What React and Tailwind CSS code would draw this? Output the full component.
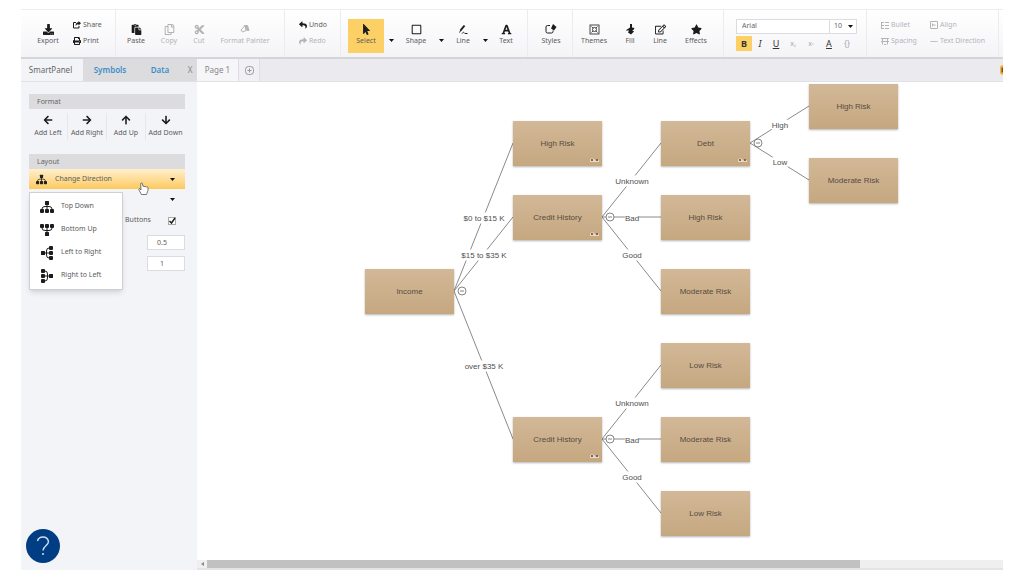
import { useState } from "react";
import {
  FaArrowDown,
  FaArrowLeft,
  FaArrowRight,
  FaArrowUp,
  FaCut,
  FaDownload,
  FaFont,
  FaMousePointer,
  FaPaste,
  FaPrint,
  FaRegCopy,
  FaRegEdit,
  FaRegSquare,
  FaReply,
  FaShare,
  FaStar,
} from "react-icons/fa";

const NODE_W = 89;
const NODE_H = 44;

// x is the left edge, y the vertical centre
const NODES = [
  { id: "income", label: "Income", x: 168, y: 209 },
  { id: "high", label: "High Risk", x: 316, y: 61, more: true },
  { id: "credit1", label: "Credit History", x: 316, y: 135, more: true },
  { id: "credit2", label: "Credit History", x: 316, y: 357, more: true },
  { id: "debt", label: "Debt", x: 464, y: 61, more: true },
  { id: "bad1", label: "High Risk", x: 464, y: 135 },
  { id: "good1", label: "Moderate Risk", x: 464, y: 209 },
  { id: "unknown2", label: "Low Risk", x: 464, y: 283 },
  { id: "bad2", label: "Moderate Risk", x: 464, y: 357 },
  { id: "good2", label: "Low Risk", x: 464, y: 431 },
  { id: "debtHigh", label: "High Risk", x: 612, y: 24 },
  { id: "debtLow", label: "Moderate Risk", x: 612, y: 98 },
];

const EDGES = [
  { from: "income", to: "high", label: "$0 to $15 K" },
  { from: "income", to: "credit1", label: "$15 to $35 K" },
  { from: "income", to: "credit2", label: "over $35 K" },
  { from: "credit1", to: "debt", label: "Unknown" },
  { from: "credit1", to: "bad1", label: "Bad" },
  { from: "credit1", to: "good1", label: "Good" },
  { from: "credit2", to: "unknown2", label: "Unknown" },
  { from: "credit2", to: "bad2", label: "Bad" },
  { from: "credit2", to: "good2", label: "Good" },
  { from: "debt", to: "debtHigh", label: "High" },
  { from: "debt", to: "debtLow", label: "Low" },
];

const DIRECTIONS = [
  { label: "Top Down", turn: "rotate-0" },
  { label: "Bottom Up", turn: "rotate-180" },
  { label: "Left to Right", turn: "-rotate-90" },
  { label: "Right to Left", turn: "rotate-90" },
];

const findNode = (id) => NODES.find((n) => n.id === id);

function Caret() {
  return (
    <svg width="5" height="3" viewBox="0 0 5 3" className="shrink-0">
      <path d="M0 0h5L2.5 3z" fill="#111" />
    </svg>
  );
}

function TreeIcon({ className }) {
  return (
    <svg viewBox="0 0 14 14" fill="currentColor" className={`shrink-0 ${className}`}>
      <rect x="5" y="1" width="4" height="4" rx=".5" />
      <rect x="0" y="9" width="4" height="4" rx="1" />
      <rect x="5" y="9" width="4" height="4" rx="1" />
      <rect x="10" y="9" width="4" height="4" rx="1" />
      <path d="M7 5v4M2 9Q2 6.500 5 6.500h4Q12 6.500 12 9" fill="none" stroke="currentColor" />
    </svg>
  );
}

function Group({ className, children }) {
  return (
    <div
      className={`flex shrink-0 items-start border-r border-[#ececf0] ${className}`}
    >
      {children}
    </div>
  );
}

function Tool({ icon, label, width, active, disabled }) {
  return (
    <button
      disabled={disabled}
      className={`mt-[9px] flex h-[34px] shrink-0 flex-col items-center pt-[4px] ${width} ${
        active ? "bg-[#fdd065]" : ""
      } ${disabled ? "text-[#b4b4b8]" : "text-[#1c1c1c]"}`}
    >
      <span className="flex h-[12px] items-center text-[11px]">{icon}</span>
      <span
        className={`text-[7px] leading-[12px] whitespace-nowrap ${
          disabled ? "" : "text-[#5c5c5c]"
        }`}
      >
        {label}
      </span>
    </button>
  );
}

function CaretButton({ name }) {
  return (
    <button
      aria-label={name}
      className="mt-[9px] flex h-[34px] w-[14px] shrink-0 items-center justify-center pt-[9px]"
    >
      <Caret />
    </button>
  );
}

function SmallTool({ icon, label, disabled }) {
  return (
    <button
      disabled={disabled}
      className={`flex h-[16px] items-center gap-[2px] text-[7px] leading-[10px] whitespace-nowrap ${
        disabled ? "text-[#b4b4b8]" : "text-[#1c1c1c]"
      }`}
    >
      <span className="text-[8px]">{icon}</span>
      <span className={disabled ? "" : "text-[#5c5c5c]"}>{label}</span>
    </button>
  );
}

function ShareIcon() {
  return (
    <svg width="8" height="8" viewBox="0 0 8 8">
      <path d="M3 1.500H.5v5.500h5.500V5" fill="none" stroke="currentColor" />
      <path d="M5.500 0 8 2.200 5.500 4.400V3.200Q3.500 3 2.500 5 2.500 1.500 5.500 1.300z" fill="currentColor" />
    </svg>
  );
}

function PainterIcon() {
  return (
    <svg width="10" height="10" viewBox="0 0 10 10" fill="none" stroke="currentColor">
      <path d="M5 1.500 1 6l1.500 2L6 6.500z" />
      <path d="M4.500 1.500h3L9 6.500H7z" fill="currentColor" />
    </svg>
  );
}

function PenIcon() {
  return (
    <svg width="11" height="11" viewBox="0 0 11 11" fill="none" stroke="currentColor">
      <path d="M2.500 6.500 6.500 1.500" strokeWidth="2" />
      <path d="M1.500 8.500 3 6M4 9.500c1.500-2 2-1 3 0h2.500" />
    </svg>
  );
}

function StylesIcon() {
  return (
    <svg width="12" height="10" viewBox="0 0 12 10" fill="none" stroke="currentColor">
      <path d="M5 1.500H2.500Q1 1.500 1 3v4.500Q1 9 2.500 9h4Q8 9 8 7.500V6.500" />
      <path d="M8 0 11.500 3 9 6.500 6 4.500z" fill="currentColor" stroke="none" />
    </svg>
  );
}

function ThemesIcon() {
  return (
    <svg width="11" height="11" viewBox="0 0 11 11" fill="none" stroke="currentColor" strokeWidth=".8">
      <rect x="1" y="1" width="9" height="9" />
      <circle cx="5.500" cy="5.500" r="2" />
      <path d="M2.500 2.500l1.500 1.500M8.500 2.500 7 4M2.500 8.500 4 7M8.500 8.500 7 7" />
    </svg>
  );
}

function FillIcon() {
  return (
    <svg width="10" height="11" viewBox="0 0 10 11" fill="currentColor">
      <path d="M5 0h2v3.500L9.500 4 8.500 6H7l2 1.500L6 10.500 3 8.500 4 6.500H.5L5 3.500z" />
    </svg>
  );
}

function BulletIcon() {
  return (
    <svg width="8" height="7" viewBox="0 0 8 7" fill="none" stroke="currentColor">
      <path d="M0 .5h3M4 .5h4M0 3.500h3M4 3.500h4M0 6.500h3M4 6.500h4M.5 0v7" />
    </svg>
  );
}

function SpacingIcon() {
  return (
    <svg width="8" height="7" viewBox="0 0 8 7" fill="none" stroke="currentColor">
      <path d="M0 .5h8M0 3.500h8M1.500 1v5.500M6.500 1v5.500M3 6.500h2" />
    </svg>
  );
}

function AlignIcon() {
  return (
    <svg width="8" height="8" viewBox="0 0 8 8" fill="none" stroke="currentColor">
      <path d="M.5.5h7v7h-7zM2.500 4h3M2.500 2.500v3" />
    </svg>
  );
}

function HandCursor() {
  return (
    <svg
      width="11"
      height="14"
      viewBox="0 0 11 14"
      className="pointer-events-none absolute top-[13px] left-[109px] z-20"
    >
      <path
        d="M3 8 1.500 6.500Q.5 7 1 8l2.500 4.500h5L10 8.500V5.500Q9.500 4.500 8.500 5.200 8 4 6.800 4.700 6 3.700 5 4.300L4.200 1.200Q3 .5 2.700 1.500z"
        fill="#fff"
        stroke="#444"
        strokeWidth=".7"
      />
    </svg>
  );
}

function Toolbar() {
  const [bold, setBold] = useState(true);

  return (
    <header className="flex h-[50px] shrink-0 overflow-hidden border-t border-b-2 border-t-[#ececee] border-b-[#d3d5d8] bg-linear-to-b from-white to-[#f4f4f7]">
      <Group className="w-[95px] pl-[10px]">
        <Tool icon={<FaDownload />} label="Export" width="w-[34px]" />
        <div className="mt-[7px] ml-[8px]">
          <SmallTool icon={<ShareIcon />} label="Share" />
          <SmallTool icon={<FaPrint />} label="Print" />
        </div>
      </Group>

      <Group className="w-[169px] pl-[3px]">
        <Tool icon={<FaPaste />} label="Paste" width="w-[34px]" />
        <Tool icon={<FaRegCopy />} label="Copy" width="w-[32px]" disabled />
        <Tool icon={<FaCut />} label="Cut" width="w-[28px]" disabled />
        <Tool
          icon={<PainterIcon />}
          label="Format Painter"
          width="w-[64px]"
          disabled
        />
      </Group>

      <Group className="w-[56px] pl-[14px]">
        <div className="mt-[7px]">
          <SmallTool icon={<FaReply />} label="Undo" />
          <SmallTool icon={<FaShare />} label="Redo" disabled />
        </div>
      </Group>

      <Group className="w-[187px] pl-[7px]">
        <Tool icon={<FaMousePointer />} label="Select" width="w-[36px]" active />
        <CaretButton name="Select options" />
        <Tool icon={<FaRegSquare />} label="Shape" width="w-[36px]" />
        <CaretButton name="Shape options" />
        <Tool icon={<PenIcon />} label="Line" width="w-[30px]" />
        <CaretButton name="Line options" />
        <Tool icon={<FaFont />} label="Text" width="w-[28px]" />
      </Group>

      <Group className="w-[45px] pl-[1px]">
        <Tool icon={<StylesIcon />} label="Styles" width="w-[44px]" />
      </Group>

      <Group className="w-[151px]">
        <Tool icon={<ThemesIcon />} label="Themes" width="w-[42px]" />
        <Tool icon={<FillIcon />} label="Fill" width="w-[30px]" />
        <Tool icon={<FaRegEdit />} label="Line" width="w-[30px]" />
        <Tool icon={<FaStar />} label="Effects" width="w-[42px]" />
      </Group>

      <Group className="w-[143px] pl-[12px]">
        <div className="mt-[9px] w-[121px]">
          <div className="flex h-[15px] border border-[#dcdce0] bg-white text-[7px] text-[#666]">
            <input
              aria-label="Font"
              defaultValue="Arial"
              className="w-[93px] border-r border-[#dcdce0] pl-[5px] outline-none"
            />
            <div className="relative flex flex-1 items-center">
              <select
                aria-label="Font size"
                className="w-full appearance-none pl-[4px] outline-none"
              >
                <option>10</option>
              </select>
              <span className="pointer-events-none absolute right-[3px]">
                <Caret />
              </span>
            </div>
          </div>
          <div className="mt-[2px] flex h-[15px] items-stretch text-[9px] leading-[15px] text-[#333]">
            <button
              onClick={() => setBold(!bold)}
              className={`w-[16px] font-bold ${bold ? "bg-[#fdd065]" : ""}`}
            >
              B
            </button>
            <button className="w-[16px] italic">I</button>
            <button className="w-[16px] underline">U</button>
            <button className="w-[18px] text-[7px] text-[#a8a8ac]">
              x<span className="text-[5px]">&#8322;</span>
            </button>
            <button className="w-[18px] text-[7px] text-[#a8a8ac]">
              x<span className="text-[5px]">&#8319;</span>
            </button>
            <button className="w-[18px] underline">A</button>
            <button className="w-[18px] text-[8px] text-[#a8a8ac]">{"{}"}</button>
          </div>
        </div>
      </Group>

      <Group className="w-[132px] pl-[14px]">
        <div className="mt-[7px] w-[49px]">
          <SmallTool icon={<BulletIcon />} label="Bullet" disabled />
          <SmallTool icon={<SpacingIcon />} label="Spacing" disabled />
        </div>
        <div className="mt-[7px]">
          <SmallTool icon={<AlignIcon />} label="Align" disabled />
          <SmallTool icon="—" label="Text Direction" disabled />
        </div>
      </Group>
    </header>
  );
}

function TabBar() {
  return (
    <nav className="flex h-[23px] shrink-0 overflow-hidden border-b border-[#e2e2e6] bg-[#ebebef] text-[8px] leading-[22px]">
      <div className="flex w-[176px] shrink-0 bg-[#dcdcde]">
        <button className="w-[62px] bg-[#f3f4f8] pr-[3px] text-center text-[#666]">
          SmartPanel
        </button>
        <button className="w-[54px] font-semibold text-[#3a8fc9]">Symbols</button>
        <button className="w-[46px] font-semibold text-[#3a8fc9]">Data</button>
        <button className="flex-1 text-[#888]" aria-label="Close panel">
          X
        </button>
      </div>
      <button className="w-[42px] shrink-0 border-r border-[#dedee2] bg-[#f6f6f9] text-[#888]">
        Page 1
      </button>
      <button
        aria-label="Add page"
        className="flex w-[21px] shrink-0 items-center justify-center border-r border-[#dedee2] bg-[#f1f1f5]"
      >
        <svg width="9" height="9" viewBox="0 0 9 9" fill="none" stroke="#999">
          <rect x=".5" y=".5" width="8" height="8" rx="3" />
          <path d="M4.500 2.500v4M2.500 4.500h4" />
        </svg>
      </button>
      <svg
        width="3"
        height="10"
        viewBox="0 0 3 10"
        className="ml-auto shrink-0 self-center"
      >
        <path d="M3 0Q0 0 0 3v4q0 3 3 3z" fill="#f2b544" />
        <path d="M3 2.500H1.500v5H3z" fill="#8a4a10" />
      </svg>
    </nav>
  );
}

function AddButton({ icon, label }) {
  return (
    <button className="flex flex-col items-center border-r border-[#e6e7eb] text-[#1c1c1c] last:border-r-0">
      <span className="flex h-[13px] items-center text-[10px]">{icon}</span>
      <span className="text-[7px] leading-[14px] whitespace-nowrap text-[#5c5c5c]">
        {label}
      </span>
    </button>
  );
}

function SectionTitle({ children }) {
  return (
    <h2 className="h-[15px] bg-[#dcdcde] pl-[8px] text-[7px] leading-[15px] text-[#666]">
      {children}
    </h2>
  );
}

function SmartPanel() {
  const [open, setOpen] = useState(true);

  return (
    <aside className="relative w-[176px] shrink-0 bg-[#f3f4f8] pt-[12px] pr-[12px] pl-[8px] text-[7px] text-[#5c5c5c]">
      <SectionTitle>Format</SectionTitle>
      <div className="mt-[4px] grid h-[27px] grid-cols-4">
        <AddButton icon={<FaArrowLeft />} label="Add Left" />
        <AddButton icon={<FaArrowRight />} label="Add Right" />
        <AddButton icon={<FaArrowUp />} label="Add Up" />
        <AddButton icon={<FaArrowDown />} label="Add Down" />
      </div>

      <div className="mt-[14px]">
        <SectionTitle>Layout</SectionTitle>
      </div>
      <div className="relative">
        <button
          onClick={() => setOpen(!open)}
          className="flex h-[20px] w-full items-center bg-linear-to-b from-[#fff0cc] to-[#fdc95a] pr-[10px] pl-[7px]"
        >
          <TreeIcon className="h-[11px] w-[11px] text-[#222]" />
          <span className="ml-[8px] flex-1 text-left leading-[12px]">
            Change Direction
          </span>
          <Caret />
        </button>
        <HandCursor />
        {open && (
          <ul className="absolute top-[23px] left-0 z-10 w-[94px] border border-[#d0d0d4] bg-white py-[2px] shadow-md">
            {DIRECTIONS.map((d) => (
              <li key={d.label}>
                <button className="flex h-[23px] w-full items-center gap-[7px] pl-[10px]">
                  <TreeIcon
                    className={`h-[14px] w-[14px] text-[#1c1c1c] ${d.turn}`}
                  />
                  {d.label}
                </button>
              </li>
            ))}
          </ul>
        )}
      </div>

      <button
        aria-label="Arrangement"
        className="flex h-[20px] w-full items-center justify-end pr-[10px]"
      >
        <Caret />
      </button>
      <label className="flex h-[23px] items-center pr-[9px] pl-[96px]">
        <span className="flex-1">Buttons</span>
        <span className="relative flex h-[8px] w-[8px]">
          <input
            type="checkbox"
            defaultChecked
            className="peer h-[8px] w-[8px] appearance-none border border-[#aaa] bg-white"
          />
          <svg
            viewBox="0 0 8 8"
            className="pointer-events-none absolute inset-0 hidden peer-checked:block"
          >
            <path d="M1.500 4 3.500 6 7 1" fill="none" stroke="#222" strokeWidth="1.500" />
          </svg>
        </span>
      </label>
      <div className="mt-[3px] flex flex-col items-end gap-[6px]">
        <input
          aria-label="Spacing"
          defaultValue="0.5"
          className="h-[15px] w-[38px] border border-[#dcdce0] bg-white pr-[8px] text-center"
        />
        <input
          aria-label="Levels"
          defaultValue="1"
          className="h-[15px] w-[38px] border border-[#dcdce0] bg-white pr-[8px] text-center"
        />
      </div>

      <button
        aria-label="Help"
        className="absolute bottom-[7px] left-[5px] flex h-[34px] w-[34px] items-center justify-center rounded-full bg-[#003d82]"
      >
        <svg width="14" height="20" viewBox="0 0 14 20" fill="none" stroke="#cfe0f5">
          <path
            d="M1.500 5Q2.500 1 7 1t5.500 4.500c0 4-5.500 4.500-5.500 9"
            strokeWidth="1.400"
          />
          <circle cx="7" cy="18" r="1" fill="#cfe0f5" stroke="none" />
        </svg>
      </button>
    </aside>
  );
}

function Diagram() {
  const parents = [...new Set(EDGES.map((e) => e.from))].map(findNode);

  return (
    <div className="relative flex-1 overflow-hidden bg-white font-['Liberation_Sans',Arial,sans-serif] text-[8px] leading-[11px] text-[#574b40]">
      <svg className="absolute inset-0 h-full w-full">
        {EDGES.map((e) => {
          const a = findNode(e.from);
          const b = findNode(e.to);
          return (
            <line
              key={e.from + e.to}
              x1={a.x + NODE_W}
              y1={a.y}
              x2={b.x}
              y2={b.y}
              stroke="#8a8a8a"
            />
          );
        })}
        {parents.map((p) => (
          <g key={p.id} stroke="#666" strokeWidth=".8">
            <circle cx={p.x + NODE_W + 8} cy={p.y} r="4" fill="#fff" />
            <path d={`M${p.x + NODE_W + 6} ${p.y}h4`} />
          </g>
        ))}
      </svg>

      {EDGES.map((e) => {
        const a = findNode(e.from);
        const b = findNode(e.to);
        return (
          <span
            key={e.from + e.to}
            className="absolute -translate-x-1/2 -translate-y-1/2 bg-white whitespace-nowrap text-[#505050]"
            style={{ left: (a.x + NODE_W + b.x + 1) / 2, top: (a.y + b.y + 1) / 2 }}
          >
            {e.label}
          </span>
        );
      })}

      {NODES.map((n) => (
        <div
          key={n.id}
          className="absolute flex items-center justify-center bg-linear-to-b from-[#d3b898] to-[#c5a880] shadow-[0_1px_2px_rgba(0,0,0,0.3)]"
          style={{
            left: n.x,
            top: n.y - NODE_H / 2,
            width: NODE_W,
            height: NODE_H + 1,
          }}
        >
          {n.label}
          {n.more && (
            <svg
              width="9"
              height="5"
              viewBox="0 0 9 5"
              className="absolute right-[3px] bottom-[4px]"
            >
              <path d="M0 2.500Q2 0 4.500 2.500T9 2.500V5H0z" fill="#e6d8c6" />
              <path d="M1 2h2v2H1zM6 2h2v2H6z" fill="#7d6a56" />
            </svg>
          )}
        </div>
      ))}
    </div>
  );
}

function Scrollbar() {
  return (
    <div className="flex h-[10px] shrink-0 border-b-2 border-[#e4e4e4] bg-[#efefef]">
      <button
        aria-label="Scroll left"
        className="flex w-[10px] items-center justify-center"
      >
        <svg width="3" height="4" viewBox="0 0 3 4">
          <path d="M3 0v4L0 2z" fill="#888" />
        </svg>
      </button>
      <div className="w-[81%] bg-[#c1c1c1]" />
    </div>
  );
}

export default function App() {
  return (
    <div className="flex h-screen flex-col bg-white pt-[9px] pr-[15px] pb-[6px] pl-[21px] font-['Noto_Sans','Open_Sans',sans-serif]">
      <Toolbar />
      <TabBar />
      <div className="flex min-h-0 flex-1">
        <SmartPanel />
        <main className="flex min-w-0 flex-1 flex-col">
          <Diagram />
          <Scrollbar />
        </main>
      </div>
    </div>
  );
}
